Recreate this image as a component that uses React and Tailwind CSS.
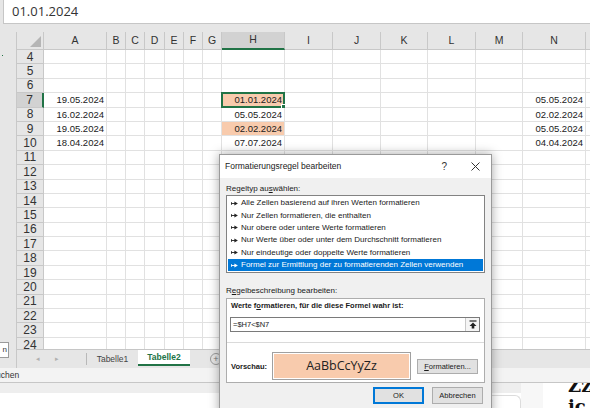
import React from 'react';

const COLS = ['A', 'B', 'C', 'D', 'E', 'F', 'G', 'H', 'I', 'J', 'K', 'L', 'M', 'N', 'O'];
const ROWS = [4, 5, 6, 7, 8, 9, 10, 11, 12, 13, 14, 15, 16, 17, 18, 19, 20, 21, 22, 23, 24];

const data = {
  7: { A: '19.05.2024', H: '01.01.2024', N: '05.05.2024' },
  8: { A: '16.02.2024', H: '05.05.2024', N: '02.02.2024' },
  9: { A: '19.05.2024', H: '02.02.2024', N: '05.05.2024' },
  10: { A: '18.04.2024', H: '07.07.2024', N: '04.04.2024' },
};
const filled = { '7H': true, '9H': true };

const ruleTypes = [
  'Alle Zellen basierend auf ihren Werten formatieren',
  'Nur Zellen formatieren, die enthalten',
  'Nur obere oder untere Werte formatieren',
  'Nur Werte über oder unter dem Durchschnitt formatieren',
  'Nur eindeutige oder doppelte Werte formatieren',
  'Formel zur Ermittlung der zu formatierenden Zellen verwenden',
];

const Arrow = ({ color }) => (
  <svg width="7" height="5" viewBox="0 0 7 5" className="shrink-0">
    <path d="M0.5 1.2v2.6" stroke={color} strokeWidth="0.9" />
    <path d="M0.5 2.5h3.5" stroke={color} strokeWidth="0.9" />
    <path d="M3.4 0.4L6.9 2.5L3.4 4.6Z" fill={color} />
  </svg>
);

const Grid = () => (
  <div className="h-[317px] overflow-hidden">
    <div className="grid grid-cols-[27px_63px_19px_19px_20px_19px_19px_19px_63px_48px_48px_47px_48px_47px_63px_60px] grid-rows-[18px] auto-rows-[14.4px] bg-white">
      <div className="bg-[#e6e6e6] border-r border-b border-[#c8c8c8] flex items-end justify-end p-[2px]">
        <svg width="11" height="11" viewBox="0 0 11 11">
          <path d="M11 0V11H0Z" fill="#b5b5b5" />
        </svg>
      </div>
      {COLS.map((c) => (
        <div
          key={c}
          className={
            c === 'H'
              ? 'bg-[#d2d2d2] border-r border-[#c8c8c8] border-b-2 border-b-[#217346] flex items-center justify-center text-[10.5px] text-[#333]'
              : 'bg-[#e6e6e6] border-r border-b border-[#c8c8c8] flex items-center justify-center text-[10.5px] text-[#333]'
          }
        >
          {c === 'O' ? '' : c}
        </div>
      ))}
      {ROWS.map((r) => (
        <React.Fragment key={r}>
          <div
            className={
              r === 7
                ? 'bg-[#d2d2d2] border-r-2 border-r-[#217346] border-b border-[#c8c8c8] flex items-center justify-center text-[12px] text-[#333] leading-none'
                : 'bg-[#e6e6e6] border-r border-b border-[#c8c8c8] flex items-center justify-center text-[12px] text-[#333] leading-none'
            }
          >
            {r}
          </div>
          {COLS.map((c) => {
            const v = data[r] && data[r][c];
            const fill = filled[r + c];
            const sel = r === 7 && c === 'H';
            return (
              <div
                key={c}
                className={
                  (fill ? 'bg-[#f8cbad] ' : '') +
                  'relative border-r border-b border-[#e1e1e1] flex items-center justify-end pr-[2px] text-[9.5px] text-[#1a1a1a] leading-none'
                }
              >
                {v}
                {sel && (
                  <div className="absolute -left-px -top-px -right-px -bottom-px border-2 border-[#217346]">
                    <div className="absolute -right-[3px] -bottom-[3px] w-[5px] h-[5px] bg-[#217346] border border-white" />
                  </div>
                )}
              </div>
            );
          })}
        </React.Fragment>
      ))}
    </div>
  </div>
);

const Dialog = () => (
  <div className="absolute left-[219px] top-[154px] w-[273px] h-[262px] bg-[#f0f0f0] border border-[#9a9a9a] shadow-[0_0_10px_rgba(0,0,0,0.35)] font-['Liberation_Sans',sans-serif] text-[#1a1a1a]">
    <div className="h-[23px] bg-white flex items-center pl-[5px] pr-[11px] text-[8.5px]">
      <span>Formatierungsregel bearbeiten</span>
      <span className="ml-auto text-[10px] text-[#333]">?</span>
      <svg width="9" height="9" viewBox="0 0 9 9" className="ml-[24px]">
        <path d="M0.5 0.5L8.5 8.5M8.5 0.5L0.5 8.5" stroke="#333" strokeWidth="1" />
      </svg>
    </div>
    <div className="px-[6px]">
      <div className="mt-[6px] text-[8px] leading-[10px]">
        Regeltyp au<span className="underline">s</span>wählen:
      </div>
      <div className="mt-[1px] bg-white border border-[#828282] pt-px px-px">
        {ruleTypes.map((t, i) => (
          <div
            key={t}
            className={
              i === 5
                ? 'h-[12.4px] flex items-center gap-[3px] pl-[3px] bg-[#0078d7] text-white text-[8px] whitespace-nowrap'
                : 'h-[12.4px] flex items-center gap-[3px] pl-[3px] text-[8px] whitespace-nowrap'
            }
          >
            <Arrow color={i === 5 ? '#ffffff' : '#222222'} />
            <span>{t}</span>
          </div>
        ))}
        <div className="h-px" />
      </div>
      <div className="mt-[13px] text-[8px] leading-[10px]">
        R<span className="underline">e</span>gelbeschreibung bearbeiten:
      </div>
      <div className="mt-[2px] bg-white border border-[#adadad] pb-[2px]">
        <div className="pl-[4px] pt-[2px] text-[7.5px] font-bold leading-[10px]">
          Werte f<span className="underline">o</span>rmatieren, für die diese Formel wahr ist:
        </div>
        <div className="mt-[6px] ml-[3px] w-[250px] h-[15px] border border-[#7a7a7a] flex items-center">
          <span className="pl-[2px] text-[7.5px] flex-1">=$H7&lt;$N7</span>
          <div className="w-[14px] h-full border-l border-[#c8c8c8] bg-[#f5f5f5] flex items-center justify-center">
            <svg width="8" height="9" viewBox="0 0 8 9">
              <path d="M0.5 1h7" stroke="#222" strokeWidth="1.2" />
              <path d="M4 2.5L7.5 6H5.3V8.5H2.7V6H0.5Z" fill="#222" />
            </svg>
          </div>
        </div>
        <div className="mt-[10px] border-t border-[#dadada]" />
        <div className="mt-[9px] flex items-center pl-[4px]">
          <span className="w-[41px] text-[7.5px] font-bold">Vorschau:</span>
          <div className="w-[139px] h-[28px] border border-[#a0a0a0] p-px">
            <div className="w-full h-full bg-[#f8cbad] flex items-center justify-center text-[12.5px] font-['Open_Sans',sans-serif] text-[#222]">
              AaBbCcYyZz
            </div>
          </div>
          <div className="ml-[6px] w-[61px] h-[15px] bg-[#e1e1e1] border border-[#adadad] flex items-center justify-center text-[7.5px]">
            <span className="underline">F</span>ormatieren...
          </div>
        </div>
      </div>
      <div className="mt-[4px] flex justify-end gap-[8px] pr-[2px]">
        <div className="w-[51px] h-[17px] bg-[#e1e1e1] border-2 border-[#0078d7] flex items-center justify-center text-[7.5px]">
          OK
        </div>
        <div className="w-[51px] h-[17px] bg-[#e1e1e1] border border-[#adadad] flex items-center justify-center text-[7.5px]">
          Abbrechen
        </div>
      </div>
    </div>
  </div>
);

export default function App() {
  return (
    <div className="relative w-[590px] h-[408px] overflow-hidden bg-[#e6e6e6] font-['Liberation_Sans',sans-serif]">
      <div className="h-[24px] ml-[3px] bg-white border-b border-l border-[#c6c6c6] flex items-center pl-[8px] text-[13px] text-[#333] font-['Open_Sans',sans-serif]">
        01.01.2024
      </div>
      <div className="h-[8px]" />
      <div className="flex h-[336px]">
        <div className="w-[17px] shrink-0 flex flex-col border-r border-[#c8c8c8]">
          <div className="mt-[23px] ml-[2px] w-px h-px bg-[#217346]" />
          <div className="mt-[286px] w-[9px] h-[16px] bg-white border border-[#9a9a9a] border-l-0 flex items-center justify-end pr-px text-[8px] text-[#333] overflow-hidden">
            n
          </div>
        </div>
        <div className="flex-1 flex flex-col min-w-0">
          <Grid />
          <div className="h-[19px] bg-[#e6e6e6] border-t border-[#c6c6c6] flex items-stretch text-[8.5px]">
            <div className="flex items-center gap-[15px] pl-[19px] text-[#b0b0b0] text-[7px]">
              <span>◂</span>
              <span>▸</span>
            </div>
            <div className="ml-[27px] my-[3px] w-px bg-[#b8b8b8]" />
            <div className="w-[51px] flex items-center justify-center text-[#444]">Tabelle1</div>
            <div className="w-[52px] bg-white border-b-2 border-[#217346] mb-[2px] flex items-center justify-center font-bold text-[#217346]">
              Tabelle2
            </div>
            <div className="ml-[20px] flex items-center">
              <div className="w-[12px] h-[12px] rounded-full border border-[#9a9a9a] flex items-center justify-center text-[#777] text-[9px] leading-none">
                +
              </div>
            </div>
          </div>
        </div>
      </div>
      <div className="h-[15px] bg-[#f3f3f3] border-b border-[#c6c6c6] flex items-center text-[8.5px] text-[#333]">
        <span className="-ml-[4px]">uchen</span>
      </div>
      <div className="flex h-[25px] bg-white">
        <div className="w-[521px] flex flex-col">
          <div className="h-[10px] bg-[#eeeeee]" />
          <div className="flex-1 flex">
            <div className="ml-[400px] mt-[2px] flex-1 border-t border-r border-[#dcdcdc] rounded-tr-[6px]" />
          </div>
        </div>
        <div className="w-[22px] bg-[#f7f7f7]" />
        <div className="flex-1 overflow-hidden pl-[25px]">
          <div className="-mt-[8px] font-['DejaVu_Serif',serif] font-bold text-[18px] leading-[21px] text-[#111]">
            <div>Zz</div>
            <div>ic</div>
          </div>
        </div>
      </div>
      <Dialog />
    </div>
  );
}
